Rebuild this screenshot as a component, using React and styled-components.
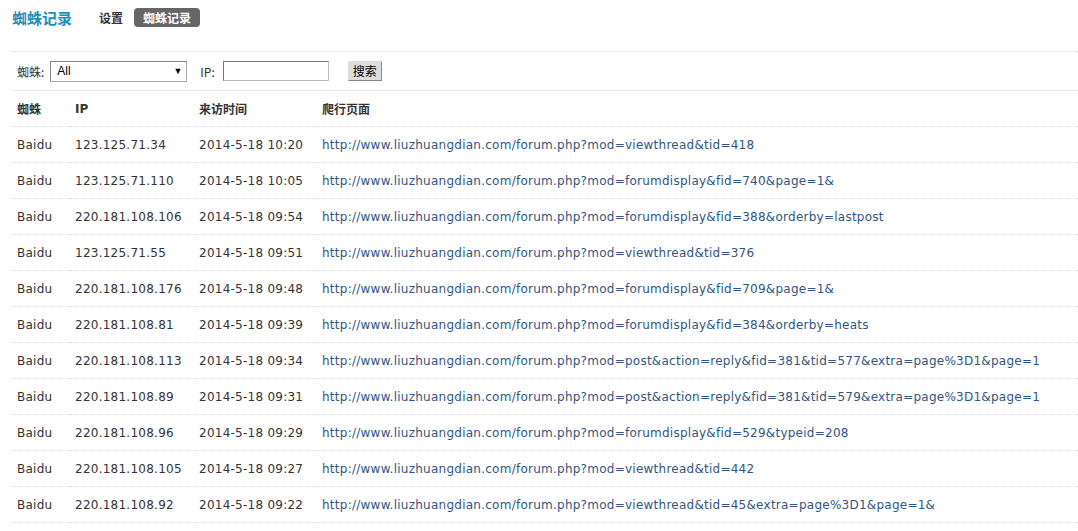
import styled, { createGlobalStyle } from "styled-components";

const Global = createGlobalStyle`
  body {
    margin: 0;
    background: #fff;
    font-family: "DejaVu Sans", Verdana, "Noto Sans CJK SC", sans-serif;
    font-size: 12px;
    color: #333;
  }
`;

const Page = styled.div`
  padding: 0 0 0 12px;
`;

const TitleBar = styled.div`
  display: flex;
  align-items: center;
  height: 34px;
`;

const Title = styled.h3`
  margin: 0 27px 0 0;
  font-size: 15px;
  font-weight: bold;
  color: #1b8fc0;
  font-family: "Noto Sans CJK SC", sans-serif;
`;

const Tab = styled.span`
  display: inline-block;
  margin-right: 11px;
  padding: 0 ${(p) => (p.$active ? "9px" : "0")};
  height: 19px;
  line-height: 19px;
  border-radius: 4px;
  font-weight: bold;
  font-family: "Noto Sans CJK SC", sans-serif;
  background: ${(p) => (p.$active ? "#666" : "transparent")};
  color: ${(p) => (p.$active ? "#fff" : "#333")};
`;

const FilterBar = styled.div`
  display: flex;
  align-items: center;
  height: 38px;
  margin-top: 17px;
  padding-left: 5px;
  border-top: 1px dotted #ddd;
  border-bottom: 1px solid #deeffb;
  font-family: "Noto Sans CJK SC", sans-serif;
`;

const Label = styled.span`
  margin-right: ${(p) => p.$gap || 5}px;
`;

const Select = styled.div`
  display: flex;
  align-items: center;
  justify-content: space-between;
  box-sizing: border-box;
  width: 137px;
  height: 21px;
  margin-right: 13px;
  padding: 0 4px 0 6px;
  border: 1px solid #aaa;
  border-top-color: #888;
  border-left-color: #888;
  font-family: "Liberation Sans", Arial, sans-serif;
  font-size: 12px;
  color: #000;
`;

const Arrow = styled.span`
  font-size: 9px;
`;

const Input = styled.div`
  box-sizing: border-box;
  width: 106px;
  height: 20px;
  margin-right: 19px;
  border: 1px solid #bbb;
  border-top-color: #777;
  border-left-color: #777;
`;

const Button = styled.button`
  height: 20px;
  padding: 0 4px;
  border: 1px solid #888;
  border-top-color: #ddd;
  border-left-color: #ddd;
  background: #ddd;
  color: #000;
  font-family: "Noto Sans CJK SC", sans-serif;
  font-size: 12px;
  line-height: 16px;
`;

const Table = styled.table`
  width: 100%;
  table-layout: fixed;
  border-collapse: collapse;
`;

const Cell = styled.td`
  height: 35px;
  padding: 0 0 0 5px;
  border-bottom: 1px dotted #ddd;
  white-space: nowrap;
  overflow: hidden;
  letter-spacing: 0.25px;
`;

const Head = styled.th`
  height: 35px;
  padding: 0 0 0 5px;
  text-align: left;
  font-weight: bold;
  font-family: "DejaVu Sans", "Noto Sans CJK SC", sans-serif;
  border-bottom: 1px dotted #ddd;
`;

const Link = styled.a`
  color: #2f5686;
  text-decoration: none;
`;

const base = "http://www.liuzhuangdian.com/forum.php?mod=";

const rows = [
  ["123.125.71.34", "2014-5-18 10:20", "viewthread&tid=418"],
  ["123.125.71.110", "2014-5-18 10:05", "forumdisplay&fid=740&page=1&"],
  ["220.181.108.106", "2014-5-18 09:54", "forumdisplay&fid=388&orderby=lastpost"],
  ["123.125.71.55", "2014-5-18 09:51", "viewthread&tid=376"],
  ["220.181.108.176", "2014-5-18 09:48", "forumdisplay&fid=709&page=1&"],
  ["220.181.108.81", "2014-5-18 09:39", "forumdisplay&fid=384&orderby=heats"],
  ["220.181.108.113", "2014-5-18 09:34", "post&action=reply&fid=381&tid=577&extra=page%3D1&page=1"],
  ["220.181.108.89", "2014-5-18 09:31", "post&action=reply&fid=381&tid=579&extra=page%3D1&page=1"],
  ["220.181.108.96", "2014-5-18 09:29", "forumdisplay&fid=529&typeid=208"],
  ["220.181.108.105", "2014-5-18 09:27", "viewthread&tid=442"],
  ["220.181.108.92", "2014-5-18 09:22", "viewthread&tid=45&extra=page%3D1&page=1&"],
];

export default function App() {
  return (
    <Page>
      <Global />
      <TitleBar>
        <Title>蜘蛛记录</Title>
        <Tab>设置</Tab>
        <Tab $active>蜘蛛记录</Tab>
      </TitleBar>
      <FilterBar>
        <Label $gap={6}>蜘蛛:</Label>
        <Select>
          All <Arrow>▼</Arrow>
        </Select>
        <Label $gap={8}>IP:</Label>
        <Input />
        <Button>搜索</Button>
      </FilterBar>
      <Table>
        <colgroup>
          <col style={{ width: 58 }} />
          <col style={{ width: 124 }} />
          <col style={{ width: 123 }} />
          <col />
        </colgroup>
        <thead>
          <tr>
            <Head>蜘蛛</Head>
            <Head>IP</Head>
            <Head>来访时间</Head>
            <Head>爬行页面</Head>
          </tr>
        </thead>
        <tbody>
          {rows.map(([ip, time, q]) => (
            <tr key={ip + time}>
              <Cell>Baidu</Cell>
              <Cell>{ip}</Cell>
              <Cell>{time}</Cell>
              <Cell>
                <Link href="#">{base + q}</Link>
              </Cell>
            </tr>
          ))}
        </tbody>
      </Table>
    </Page>
  );
}
